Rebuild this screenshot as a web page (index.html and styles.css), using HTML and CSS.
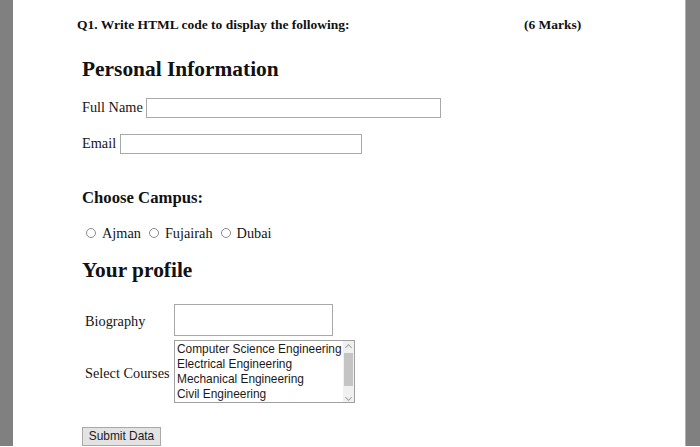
FILE: index.html
```html
<!DOCTYPE html>
<html>
<head>
<meta charset="utf-8">
<link rel="stylesheet" href="styles.css">
</head>
<body>
<div class="frame">
  <div class="page">
    <div class="question">
      <span class="q-text">Q1. Write HTML code to display the following:</span>
      <span class="marks">(6 Marks)</span>
    </div>
    <form class="form">
      <h2 class="h-personal">Personal Information</h2>
      <div class="field field-name">
        <label>Full Name</label>
        <input class="input input-name" type="text">
      </div>
      <div class="field field-email">
        <label>Email</label>
        <input class="input input-email" type="text">
      </div>
      <h3 class="h-campus">Choose Campus:</h3>
      <div class="radios">
        <span class="radio"></span><span class="radio-label">Ajman</span>
        <span class="radio"></span><span class="radio-label">Fujairah</span>
        <span class="radio"></span><span class="radio-label">Dubai</span>
      </div>
      <h2 class="h-profile">Your profile</h2>
      <div class="profile">
        <label class="cell-label">Biography</label>
        <div class="cell"><textarea class="bio"></textarea></div>
        <label class="cell-label">Select Courses</label>
        <div class="cell">
          <div class="listbox">
            <div class="options">
              <div class="option">Computer Science Engineering</div>
              <div class="option">Electrical Engineering</div>
              <div class="option">Mechanical Engineering</div>
              <div class="option">Civil Engineering</div>
            </div>
            <div class="scrollbar">
              <span class="arrow arrow-up"></span>
              <span class="thumb"></span>
              <span class="arrow arrow-down"></span>
            </div>
          </div>
        </div>
      </div>
      <button class="submit" type="button">Submit Data</button>
    </form>
  </div>
</div>
</body>
</html>
```
FILE: styles.css
```css
html, body {
  margin: 0;
  padding: 0;
  background: #ffffff;
}

.frame {
  height: 446px;
  background: #808080;
  padding: 0 14px 0 13px;
  box-sizing: border-box;
}

.page {
  height: 100%;
  background: #ffffff;
  padding: 17px 0 0 64px;
  box-sizing: border-box;
  font-family: "Liberation Serif", "Times New Roman", serif;
  color: #151515;
  border-right: 1px solid #b0b0b0;
}

.question {
  display: flex;
  font-weight: bold;
  font-size: 13.5px;
  line-height: 16px;
  color: #111;
}

.q-text {
  width: 447px;
}

.form {
  margin: 24px 0 0 5px;
}

.h-personal,
.h-profile {
  margin: 0;
  font-size: 21.4px;
  line-height: 25px;
  font-weight: bold;
  color: #111;
}

.field {
  display: flex;
  align-items: center;
  gap: 3.6px;
  font-size: 14.3px;
  line-height: 17px;
}

.field-name {
  margin-top: 15.7px;
}

.field-email {
  margin-top: 16px;
}

.input {
  height: 20px;
  box-sizing: border-box;
  border: 1px solid #a8a8a8;
  margin: 0;
  padding: 0;
  background: #fff;
}

.input-name {
  width: 295px;
}

.input-email {
  width: 242px;
}

.h-campus {
  margin: 34px 0 0;
  font-size: 16.7px;
  line-height: 19px;
  font-weight: bold;
  color: #111;
}

.radios {
  margin-top: 18px;
  display: flex;
  align-items: center;
  font-size: 14.3px;
  line-height: 17px;
  height: 17px;
}

.radio {
  width: 10px;
  height: 10px;
  box-sizing: border-box;
  border: 1px solid #8c8c8c;
  border-radius: 50%;
  margin: 0 6px 0 8px;
  background: #fff;
}

.radio:first-child {
  margin-left: 4px;
}

.h-profile {
  margin-top: 16.6px;
}

.profile {
  margin: 20.7px 0 0 3px;
  display: grid;
  grid-template-columns: 87px auto;
  column-gap: 2px;
  align-items: center;
  justify-content: start;
  font-size: 14.3px;
  line-height: 17px;
}

.cell {
  padding-bottom: 4px;
}

.bio {
  display: block;
  width: 159px;
  height: 32px;
  box-sizing: border-box;
  border: 1px solid #a8a8a8;
  margin: 0;
  padding: 0;
  resize: none;
  background: #fff;
}

.listbox {
  width: 181px;
  height: 63px;
  box-sizing: border-box;
  border: 1px solid #a0a0a0;
  display: flex;
  background: #fff;
}

.options {
  flex: 1;
  padding: 1px 0 0 2px;
  font-family: "Liberation Sans", Arial, sans-serif;
  font-size: 11.9px;
  line-height: 15px;
  color: #1a1a1a;
  overflow: hidden;
  white-space: nowrap;
}

.scrollbar {
  width: 11px;
  display: flex;
  flex-direction: column;
  align-items: center;
  background: #f0f0f0;
}

.arrow {
  width: 4px;
  height: 4px;
  border-left: 1px solid #a8a8a8;
  border-top: 1px solid #a8a8a8;
}

.arrow-up {
  margin-top: 4px;
  transform: rotate(45deg);
}

.arrow-down {
  margin-top: 9px;
  transform: rotate(225deg);
}

.thumb {
  width: 9px;
  height: 33px;
  margin-top: 3px;
  background: #c4c4c4;
}

.submit {
  display: block;
  margin-top: 19.7px;
  width: 79px;
  height: 19px;
  padding: 0;
  box-sizing: border-box;
  border: 1px solid #a9a9a9;
  background: #e3e3e3;
  font-family: "Liberation Sans", Arial, sans-serif;
  font-size: 11.9px;
  color: #1a1a1a;
}
```
